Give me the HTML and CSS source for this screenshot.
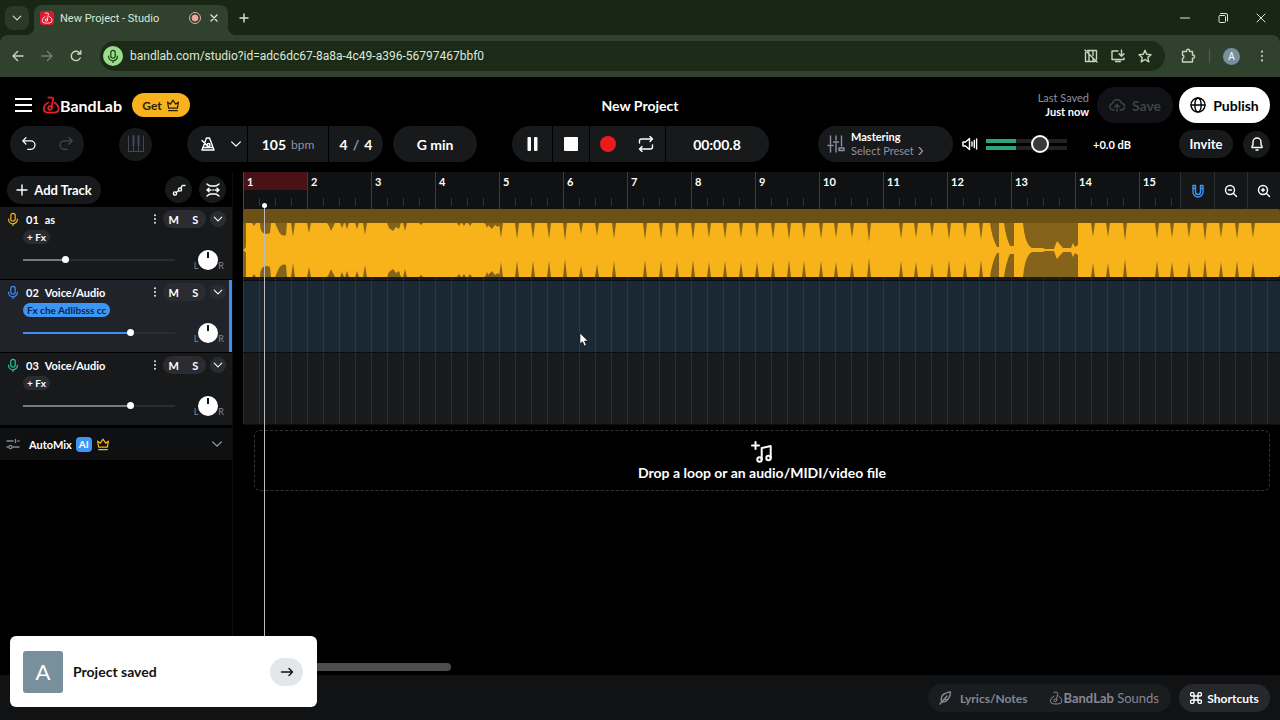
FILE: index.html
```html
<!DOCTYPE html>
<html lang="en">
<head>
<meta charset="utf-8">
<meta name="viewport" content="width=device-width, initial-scale=1.0">
<title>New Project - Studio</title>
<link rel="stylesheet" href="styles.css">
</head>
<body>

<!-- shared icons -->
<svg class="sprite" aria-hidden="true">
	<symbol id="i-chevron" viewBox="0 0 16 16"><path d="M3 5.500l5 5 5-5"/></symbol>
	<symbol id="i-mic" viewBox="0 0 16 16"><rect x="5.500" y="1.500" width="5" height="9" rx="2.500"/><path d="M3 8v.5a5 5 0 0 0 10 0V8M8 13.500v2"/></symbol>
	<symbol id="i-dots" viewBox="0 0 16 16"><g fill="currentColor" stroke="none"><circle cx="8" cy="3" r="1.200"/><circle cx="8" cy="8" r="1.200"/><circle cx="8" cy="13" r="1.200"/></g></symbol>
	<symbol id="i-crown" viewBox="0 0 16 16"><path d="M3 11.500L1.800 4.800 5 7l3-4.500L11 7l3.200-2.200L13 11.500zM3 14.300h10"/></symbol>
	<symbol id="i-logo" viewBox="0 0 20 20"><path d="M7 7.200Q2 10 2 14q0 4.500 5 4.500h6q5.500 0 5.500-4.500 0-3.500-4.500-6.800M7 1.800q3-.6 5 .4 1.200 1-.2 3.400L10.800 13"/><circle cx="8.900" cy="13.300" r="2"/></symbol>
</svg>

<div class="chrome">
	<div class="tabstrip">
		<button class="tab-search" aria-label="Search tabs"><svg class="icon s12"><use href="#i-chevron"/></svg></button>
		<div class="tab">
			<span class="favicon"><svg class="icon s12"><use href="#i-logo"/></svg></span>
			<span class="tab-title">New Project - Studio</span>
			<span class="rec-dot"></span>
			<button aria-label="Close tab"><svg class="icon s12" viewBox="0 0 12 12"><path d="M3 3l6 6M9 3l-6 6"/></svg></button>
		</div>
		<button class="tab-new" aria-label="New tab"><svg class="icon s12" viewBox="0 0 12 12"><path d="M6 2v8M2 6h8"/></svg></button>
		<div class="window-btns">
			<button aria-label="Minimize"><svg class="icon thin s12" viewBox="0 0 12 12"><path d="M1.500 6h9"/></svg></button>
			<button aria-label="Restore"><svg class="icon thin s12" viewBox="0 0 12 12"><rect x="2" y="3.500" width="6.500" height="7" rx="1"/><path d="M3.500 1.500H9q1.500 0 1.500 1.500v6"/></svg></button>
			<button aria-label="Close"><svg class="icon thin s12" viewBox="0 0 12 12"><path d="M2 2l8 8M10 2l-8 8"/></svg></button>
		</div>
	</div>

	<div class="navbar">
		<button aria-label="Back"><svg class="icon s14" viewBox="0 0 14 14"><path d="M12 7H2M6.500 2.500L2 7l4.500 4.500"/></svg></button>
		<button class="dim" aria-label="Forward"><svg class="icon s14" viewBox="0 0 14 14"><path d="M2 7h10M7.500 2.500L12 7l-4.500 4.500"/></svg></button>
		<button aria-label="Reload"><svg class="icon s14" viewBox="0 0 14 14"><path d="M11.200 9A4.700 4.700 0 1 1 11 4.500M11.800 1.800V5H8.600"/></svg></button>
		<div class="omnibox">
			<span class="mic-badge"><svg class="icon s14"><use href="#i-mic"/></svg></span>
			<input type="text" aria-label="Address" value="bandlab.com/studio?id=adc6dc67-8a8a-4c49-a396-56797467bbf0">
			<button aria-label="MIDI blocked"><svg class="icon s14" viewBox="0 0 14 14"><path d="M3.500 1.500h9v9M11 12.500H1.500V3.500M5 5.500v7M5 1.500V3M9 1.500v5M9 9.500v3M1 1l12 12"/></svg></button>
			<button aria-label="Install app"><svg class="icon s14" viewBox="0 0 14 14"><path d="M7 2H1v8.500h12V9M4.500 12.500h5M10.500 1v6M8 4.700l2.500 2.500L13 4.700"/></svg></button>
			<button aria-label="Bookmark"><svg class="icon s14" viewBox="0 0 14 14"><path d="M7 1.300l1.700 4 4.300.4-3.200 2.900 1 4.200L7 10.500l-3.800 2.300 1-4.200L1 5.700l4.300-.4z"/></svg></button>
		</div>
		<button aria-label="Extensions"><svg class="icon s16" viewBox="0 0 16 16"><path d="M2.500 3.500h4V2.700a1.500 1.500 0 0 1 3 0v.8h3V7h.5a1.600 1.600 0 0 1 0 3.200h-.5V14h-10v-3.500a1.800 1.800 0 0 0 0-3.500z"/></svg></button>
		<span class="nav-sep"></span>
		<button class="profile" aria-label="Profile">A</button>
		<button aria-label="Browser menu"><svg class="icon s14"><use href="#i-dots"/></svg></button>
	</div>
</div>

<header class="header">
	<div class="header-left">
		<button class="burger" aria-label="Menu"><span></span><span></span><span></span></button>
		<a class="brand" href="#"><svg class="icon s18"><use href="#i-logo"/></svg>BandLab</a>
		<button class="get">Get <svg class="icon s14"><use href="#i-crown"/></svg></button>
	</div>
	<h1>New Project</h1>
	<div class="header-right">
		<p class="saved">Last Saved<strong>Just now</strong></p>
		<button class="save" disabled><svg class="icon s16" viewBox="0 0 16 16"><path d="M5 13H4a3.300 3.300 0 0 1-.5-6.500 4.600 4.600 0 0 1 9-.2A3.300 3.300 0 0 1 12 13h-1M8 14.500V8M5.500 10L8 7.500l2.500 2.500"/></svg>Save</button>
		<button class="publish"><svg class="icon s16" viewBox="0 0 16 16"><circle cx="8" cy="8" r="7"/><ellipse cx="8" cy="8" rx="3.200" ry="7"/><path d="M1 8h14"/></svg>Publish</button>
	</div>
</header>

<div class="toolbar">
	<div class="tools-left">
		<div class="pill history">
			<button aria-label="Undo"><svg class="icon s16" viewBox="0 0 18 18"><path d="M5.500 2L2 5.500 5.500 9M2 5.500h9a4.500 4.500 0 0 1 0 9.500H7.500"/></svg></button>
			<button class="off" aria-label="Redo"><svg class="icon s16" viewBox="0 0 18 18"><path d="M12.500 2L16 5.500 12.500 9M16 5.500H7a4.500 4.500 0 0 0 0 9.500h3.500"/></svg></button>
		</div>
		<button class="round midi" aria-label="MIDI keyboard"><svg class="icon s18" viewBox="0 0 18 18"><path d="M1.500 1v15.500h15V1M6.500 11v5M11.500 11v5"/><path class="thick" d="M6.500 1v9.500M11.500 1v9.500"/></svg></button>
		<div class="pill tempo">
			<button class="metro" aria-label="Metronome"><svg class="icon s16" viewBox="0 0 16 16"><path d="M6.500 2h3L14 14H2zM3.500 11.500h9M2 4.500l6 6"/><circle cx="8.500" cy="9" r="1.500"/></svg></button>
			<button class="metro-more" aria-label="Metronome options"><svg class="icon s14"><use href="#i-chevron"/></svg></button>
			<button class="bpm"><b>105</b> bpm</button>
			<button class="sig">4 <i>/</i> 4</button>
		</div>
		<button class="pill key">G min</button>
	</div>
	<div class="pill transport">
		<button class="w40" aria-label="Pause"><svg class="solid s16" viewBox="0 0 16 16"><rect x="3.500" y="1" width="3.500" height="14" rx="1"/><rect x="10" y="1" width="3.500" height="14" rx="1"/></svg></button>
		<button class="w36" aria-label="Stop"><svg class="solid s16" viewBox="0 0 16 16"><rect x="1" y="1" width="14" height="14" rx="1"/></svg></button>
		<button class="w36 rec" aria-label="Record"><svg class="solid s16" viewBox="0 0 16 16"><circle cx="8" cy="8" r="8"/></svg></button>
		<button class="w38 loop" aria-label="Loop"><svg class="icon s16" viewBox="0 0 16 16"><path d="M1.500 7V5q0-2 2-2h11M12 .5L14.500 3 12 5.500M14.500 9v2q0 2-2 2h-11M4 10.500L1.500 13 4 15.500"/></svg></button>
		<output class="time">00:00.8</output>
	</div>
	<div class="tools-right">
		<button class="pill mastering">
			<svg class="icon s18" viewBox="0 0 18 18"><path d="M3.500 1v8M1 10.500h5M3.500 12v5M9 1v4M6.500 7h5M9 8.500V17M14.500 1v10M12 13h5v2.500h-5z"/></svg>
			<span><b>Mastering</b>Select Preset <svg class="icon s8" viewBox="0 0 8 8"><path d="M2 0l3.500 4L2 8"/></svg></span>
		</button>
		<svg class="icon s16 speaker" viewBox="0 0 16 16"><path d="M1 6v4h2.500l4 3.500v-11L3.500 6zM10 6v4M12.300 4.500v7M14.600 3v10"/></svg>
		<input class="master" type="range" aria-label="Master volume" min="0" max="100" value="71">
		<span class="db">+0.0 dB</span>
		<button class="invite">Invite</button>
		<button class="round bell" aria-label="Notifications"><svg class="icon s14" viewBox="0 0 14 14"><path d="M2 10.500V9.200l1-1.400V5a4 4 0 0 1 8 0v2.800l1 1.400v1.300zM6 13h2"/></svg></button>
	</div>
</div>

<main class="studio">
	<aside class="panel">
		<div class="panel-head">
			<button class="add-track"><svg class="icon s12" viewBox="0 0 12 12"><path d="M6 1v10M1 6h10"/></svg>Add Track</button>
			<button class="round small" aria-label="Automation"><svg class="icon s14" viewBox="0 0 14 14"><circle cx="3" cy="10.500" r="1.600"/><circle cx="8" cy="6.500" r="1.600"/><path d="M4.300 9.500l2.400-2M8.800 5l1.500-2.500H13"/></svg></button>
			<button class="round small" aria-label="Fit tracks"><svg class="icon s14" viewBox="0 0 14 14"><path d="M1 1q2 2 4 2h4q2 0 4-2M1 13q2-2 4-2h4q2 0 4 2M1 7h4M9 7h4M3 5.200L1 7l2 1.800M11 5.200L13 7l-2 1.800M6.800 7h.4"/></svg></button>
		</div>

		<section class="track gold">
			<div class="track-top">
				<svg class="icon s14 mic"><use href="#i-mic"/></svg>
				<span class="num">01</span><span class="name">as</span>
				<button class="more" aria-label="Track menu"><svg class="icon s12"><use href="#i-dots"/></svg></button>
				<div class="ms"><button>M</button><button>S</button></div>
				<button class="round tiny" aria-label="Expand"><svg class="icon s12"><use href="#i-chevron"/></svg></button>
			</div>
			<button class="fx">+ Fx</button>
			<div class="track-mix">
				<input class="vol" type="range" aria-label="Track 1 volume" value="27" style="--val:28%">
				<span class="pan"><i>L</i><span class="knob"></span><i>R</i></span>
			</div>
		</section>

		<section class="track blue selected">
			<div class="track-top">
				<svg class="icon s14 mic"><use href="#i-mic"/></svg>
				<span class="num">02</span><span class="name">Voice/Audio</span>
				<button class="more" aria-label="Track menu"><svg class="icon s12"><use href="#i-dots"/></svg></button>
				<div class="ms"><button>M</button><button>S</button></div>
				<button class="round tiny" aria-label="Expand"><svg class="icon s12"><use href="#i-chevron"/></svg></button>
			</div>
			<button class="fx preset">Fx che Adlibsss cc</button>
			<div class="track-mix">
				<input class="vol" type="range" aria-label="Track 2 volume" value="72" style="--val:70%">
				<span class="pan"><i>L</i><span class="knob"></span><i>R</i></span>
			</div>
		</section>

		<section class="track green">
			<div class="track-top">
				<svg class="icon s14 mic"><use href="#i-mic"/></svg>
				<span class="num">03</span><span class="name">Voice/Audio</span>
				<button class="more" aria-label="Track menu"><svg class="icon s12"><use href="#i-dots"/></svg></button>
				<div class="ms"><button>M</button><button>S</button></div>
				<button class="round tiny" aria-label="Expand"><svg class="icon s12"><use href="#i-chevron"/></svg></button>
			</div>
			<button class="fx">+ Fx</button>
			<div class="track-mix">
				<input class="vol" type="range" aria-label="Track 3 volume" value="72" style="--val:70%">
				<span class="pan"><i>L</i><span class="knob"></span><i>R</i></span>
			</div>
		</section>

		<button class="automix">
			<svg class="icon s14 sliders" viewBox="0 0 14 14"><path d="M1 4h6M12 4h1M1 10h1M7 10h6M9.500 2.500v3"/><circle cx="4.500" cy="10" r="1.600"/></svg>
			AutoMix <span class="ai">AI</span>
			<svg class="icon s14 crown"><use href="#i-crown"/></svg>
			<svg class="icon s14 end"><use href="#i-chevron"/></svg>
		</button>
	</aside>

	<div class="timeline">
		<div class="ruler">
			<ol class="bars js-bars"></ol>
			<div class="ruler-tools">
				<button class="snap" aria-label="Snap"><svg class="icon s14" viewBox="0 0 14 14"><path d="M2 1.500h2.500V8a2.500 2.500 0 0 0 5 0V1.500H12V8A5 5 0 0 1 2 8zM2 4.500h2.500M9.500 4.500H12"/></svg></button>
				<button aria-label="Zoom out"><svg class="icon s14" viewBox="0 0 14 14"><circle cx="6" cy="6" r="4.500"/><path d="M9.500 9.500L12.500 12.500M4.500 6h3"/></svg></button>
				<button aria-label="Zoom in"><svg class="icon s14" viewBox="0 0 14 14"><circle cx="6" cy="6" r="4.500"/><path d="M9.500 9.500L12.500 12.500M4.500 6h3M6 4.500v3"/></svg></button>
			</div>
		</div>
		<div class="lane">
			<div class="clip">
				<svg class="wave" width="1037" height="54" viewBox="0 0 1037 54">
					<g id="half">
						<path class="js-notches"/>
						<path d="M0 0h3v24l-2 2.500H0zM17 0h11l-1 10q-4 2-7 0-3-3-3-9zM32 0h12l-1 12q-4 2-7-3zM84 0h8l-2 4-2 4-2-5zM144 0h14l-2 6-3-2-3 4-4-3zM241 0h17l-3 4-3-2-3 4-4-4z"/>
						<path d="M747 0h9v24h-2q-5-9-7-24zM761 0h10v23h-4q-4-8-6-23zM780 0h55v22l-3 2-2-4-2 5h-8q-2-2-6-7-2 5-3 8h-9l-2-1h-11q-7-3-9-25z"/>
					</g>
					<use href="#half" transform="matrix(1 0 0 -1 0 54)"/>
				</svg>
			</div>
		</div>
		<div class="lane active"></div>
		<div class="lane"></div>
		<div class="drop">
			<svg class="icon s24 note" viewBox="0 0 24 24"><path d="M5.500 2v7M2 5.500h7"/><circle cx="9.500" cy="19.500" r="2.200"/><circle cx="18.500" cy="18" r="2.200"/><path d="M11.700 19.500V8l9-2v12"/></svg>
			<p>Drop a loop or an audio/MIDI/video file</p>
		</div>
		<div class="playhead"></div>
		<div class="scrollbar"></div>
	</div>
</main>

<footer class="footer">
	<div class="foot-pill">
		<button class="lyrics"><svg class="icon s14" viewBox="0 0 14 14"><path d="M2 13L9 5M3.500 11Q2 5 7 2.500 9.500 1 12.500 1q0 4-2 6.500Q8 11.500 3.500 11M6 8.500h4"/></svg>Lyrics/Notes</button>
		<button class="sounds"><svg class="icon s14"><use href="#i-logo"/></svg><b>BandLab</b>&nbsp;Sounds</button>
	</div>
	<button class="shortcuts"><svg class="icon s12" viewBox="0 0 12 12"><path d="M4 4h4v4H4zM4 4H2.500A1.800 1.800 0 1 1 4 2.500zM8 4V2.500A1.800 1.800 0 1 1 9.500 4zM8 8h1.500A1.800 1.800 0 1 1 8 9.500zM4 8v1.500A1.800 1.800 0 1 1 2.500 8z"/></svg>Shortcuts</button>
</footer>

<div class="toast" role="status">
	<span class="avatar">A</span>
	<p>Project saved</p>
	<button aria-label="Open project"><svg class="icon s14" viewBox="0 0 14 14"><path d="M1.500 7h11M9 3.500L12.500 7 9 10.500"/></svg></button>
</div>

<svg class="cursor" width="10" height="15" viewBox="0 0 10 15"><path d="M1 1v11l2.500-2.300L5.300 14l2-.9-1.800-4H9z"/></svg>

<script src="studio.js"></script>
</body>
</html>
```
FILE: styles.css
```css
* {
	margin: 0;
	padding: 0;
	box-sizing: border-box;
}
body {
	display: flex;
	flex-direction: column;
	min-height: 100vh;
	background: #000;
	color: #fff;
	font-family: Lato, "Liberation Sans", sans-serif;
	font-size: 14px;
	overflow: hidden;
}
button {
	display: flex;
	align-items: center;
	justify-content: center;
	border: 0;
	background: none;
	color: inherit;
	font: inherit;
	white-space: nowrap;
}
ol {
	list-style: none;
}
i {
	font-style: normal;
}
.sprite {
	position: absolute;
	width: 0;
	height: 0;
}
.icon {
	flex: none;
	fill: none;
	stroke: currentColor;
	stroke-width: 1.4;
	stroke-linecap: round;
	stroke-linejoin: round;
}
.thin {
	stroke-width: 1;
}
.solid {
	fill: currentColor;
}
.s8 { width: 8px; height: 8px; }
.s12 { width: 12px; height: 12px; }
.s14 { width: 14px; height: 14px; }
.s16 { width: 16px; height: 16px; }
.s18 { width: 18px; height: 18px; }
.s24 { width: 24px; height: 24px; }

/* browser chrome */
.chrome {
	background: #192613;
	font-family: Roboto, "Open Sans", sans-serif;
}
.tabstrip {
	display: flex;
	align-items: center;
	height: 35px;
	padding-left: 5px;
	color: #dce8d6;
}
.tab-search {
	width: 24px;
	height: 24px;
	border-radius: 8px;
	background: #2b3a27;
}
.tab {
	position: relative;
	display: flex;
	align-items: center;
	align-self: flex-end;
	width: 194px;
	height: 30px;
	margin-left: 5px;
	padding: 0 8px 4px 6px;
	border-radius: 8px 8px 0 0;
	background: #30412d;
	font-size: 11px;
}
.tab::before,
.tab::after {
	content: "";
	position: absolute;
	bottom: 0;
	width: 8px;
	height: 8px;
}
.tab::before {
	right: 100%;
	background: radial-gradient(circle at 0 0, transparent 8px, #30412d 8px);
}
.tab::after {
	left: 100%;
	background: radial-gradient(circle at 100% 0, transparent 8px, #30412d 8px);
}
.favicon {
	display: flex;
	align-items: center;
	justify-content: center;
	width: 14px;
	height: 14px;
	border-radius: 3px;
	background: #d9192c;
	color: #fff;
}
.tab-title {
	flex: 1;
	margin-left: 6px;
}
.rec-dot {
	width: 12px;
	height: 12px;
	margin-right: 7px;
	border: 1px solid #eba99d;
	border-radius: 50%;
	background: radial-gradient(#eba99d 46%, #30412d 52%);
}
.tab-new {
	width: 32px;
	height: 24px;
}
.window-btns {
	display: flex;
	gap: 26px;
	margin-left: auto;
	padding-right: 13px;
}
.navbar {
	display: flex;
	align-items: center;
	height: 42px;
	padding: 0 11px;
	gap: 15px;
	border-radius: 8px 8px 0 0;
	background: #30412d;
	color: #c5d8bd;
}
.dim {
	color: #71836c;
}
.omnibox {
	display: flex;
	flex: 1;
	align-items: center;
	gap: 13px;
	height: 30px;
	margin-left: 2px;
	padding: 0 13px 0 3px;
	border-radius: 15px;
	background: #1c2a18;
}
.mic-badge {
	display: flex;
	align-items: center;
	justify-content: center;
	width: 20px;
	height: 20px;
	border-radius: 50%;
	background: #98dc8c;
	color: #1c3a18;
}
.omnibox input {
	flex: 1;
	margin-left: -6px;
	border: 0;
	background: none;
	color: #dce8d6;
	font: 12px Roboto, "Open Sans", sans-serif;
}
.nav-sep {
	width: 1px;
	height: 14px;
	margin: 0 -2px;
	background: #50624b;
}
.profile {
	width: 17px;
	height: 17px;
	border-radius: 50%;
	background: #78909c;
	color: #fff;
	font-size: 10px;
}

/* header */
.header {
	display: grid;
	grid-template-columns: 1fr auto 1fr;
	align-items: center;
	padding: 10px 10px 0;
}
.header h1 {
	font-size: 14px;
}
.header-left,
.header-right {
	display: flex;
	align-items: center;
}
.header-right {
	justify-content: flex-end;
}
.burger {
	flex-direction: column;
	gap: 4px;
	width: 17px;
	margin-left: 5px;
}
.burger span {
	width: 17px;
	height: 2px;
	background: #fff;
}
.brand {
	display: flex;
	align-items: center;
	margin-left: 10px;
	color: #fff;
	font-size: 16px;
	font-weight: 700;
	text-decoration: none;
}
.brand .icon {
	color: #e0202c;
	stroke-width: 2;
}
.get {
	gap: 4px;
	width: 58px;
	height: 24px;
	margin-left: 10px;
	border-radius: 12px;
	background: #f7b21d;
	color: #2c1e00;
	font-size: 12px;
	font-weight: 700;
}
.saved {
	color: #8e90a4;
	font-size: 11px;
	line-height: 14px;
	text-align: right;
}
.saved strong {
	display: block;
	color: #fff;
}
.save,
.publish {
	gap: 7px;
	height: 36px;
	border-radius: 18px;
	font-weight: 700;
}
.save {
	width: 76px;
	margin: 0 6px 0 8px;
	background: #111215;
	color: #3f4146;
}
.publish {
	width: 91px;
	background: #fff;
	color: #000;
}

/* toolbar */
.toolbar {
	display: grid;
	grid-template-columns: 1fr auto 1fr;
	align-items: center;
	margin: 3px 10px 10px;
}
.tools-left,
.tools-right {
	display: flex;
	align-items: center;
}
.tools-right {
	justify-content: flex-end;
}
.pill {
	display: flex;
	height: 36px;
	overflow: hidden;
	border-radius: 18px;
	background: #17191b;
}
.pill > button {
	height: 36px;
}
.history button {
	width: 37px;
}
.off {
	color: #46494d;
}
.round {
	flex: none;
	border-radius: 50%;
	background: #17191b;
}
.midi {
	width: 33px;
	height: 33px;
	margin: 0 35px;
	color: #44485a;
}
.midi .icon {
	stroke-width: 1;
}
.midi .thick {
	stroke-width: 2;
}
.metro { width: 42px; }
.metro-more {
	width: 18px;
	padding-right: 4px;
}
.bpm {
	gap: 5px;
	width: 82px;
	border: solid #000;
	border-width: 0 1px;
	color: #8e90a4;
	font-size: 12px;
}
.bpm b {
	color: #fff;
	font-size: 14px;
}
.sig {
	gap: 5px;
	width: 54px;
	font-weight: 700;
}
.sig i {
	color: #8e90a4;
}
.key {
	width: 84px;
	margin-left: 10px;
	font-weight: 700;
}
.w36 { width: 37px; }
.w38 { width: 38px; }
.w40 { width: 41px; }
.transport .w40,
.transport .w36 {
	border-right: 1px solid #000;
}
.transport .rec {
	border-right: 0;
	color: #e81c1c;
}
.time {
	display: flex;
	align-items: center;
	justify-content: center;
	width: 104px;
	border-left: 1px solid #000;
	font-weight: 700;
}
.mastering {
	justify-content: flex-start;
	gap: 6px;
	width: 135px;
	padding-left: 9px;
	font-size: 11px;
	line-height: 14px;
	text-align: left;
	color: #8e90a4;
}
.mastering b {
	display: block;
	color: #fff;
}
.speaker {
	margin: 0 8px 0 9px;
}
.master {
	width: 81px;
	height: 20px;
	appearance: none;
	background:
		linear-gradient(90deg, #2fa57c 30px, #202224 0) 0 5px / 100% 4px no-repeat,
		linear-gradient(90deg, #2fa57c 30px, #202224 0) 0 12px / 100% 4px no-repeat;
}
.master::-webkit-slider-thumb {
	width: 18px;
	height: 18px;
	appearance: none;
	border: 2px solid #fff;
	border-radius: 50%;
	background: #3a3a3c;
}
.db {
	width: 90px;
	text-align: center;
	font-size: 11px;
	font-weight: 700;
}
.invite {
	width: 54px;
	height: 28px;
	margin-left: 22px;
	border-radius: 14px;
	background: #17191b;
	font-size: 13px;
	font-weight: 700;
}
.bell {
	width: 27px;
	height: 27px;
	margin-left: 10px;
}

/* track panel */
.studio {
	display: flex;
	flex: 1;
	gap: 10px;
}
.panel {
	flex: none;
	width: 233px;
	border-right: 1px solid #0e0e10;
}
.panel-head {
	display: flex;
	align-items: center;
	gap: 7px;
	height: 35px;
	padding: 0 6px 0 7px;
}
.add-track {
	gap: 6px;
	width: 94px;
	height: 28px;
	margin-right: auto;
	border-radius: 14px;
	background: #17191b;
	font-size: 13px;
	font-weight: 700;
}
.small {
	width: 27px;
	height: 27px;
}
.track {
	height: 72px;
	margin-bottom: 1px;
	padding: 3px 6px 0;
	background: #17191b;
	font-size: 11px;
	font-weight: 700;
}
.track.selected {
	background: #20242a;
	border-right: 3px solid #3e8df2;
	padding-right: 3px;
}
.track-top {
	display: flex;
	align-items: center;
	height: 18px;
}
.num {
	margin: 0 6px;
}
.name {
	flex: 1;
}
.gold .mic { color: #f7b21d; }
.blue .mic { color: #3e8df2; }
.green .mic { color: #1fc79a; }
.more {
	width: 14px;
	margin-right: 1px;
}
.ms {
	display: flex;
	width: 43px;
	height: 18px;
	margin-right: 4px;
	border-radius: 9px;
	background: #2a2c31;
}
.ms button {
	flex: 1;
}
.tiny {
	width: 16px;
	height: 16px;
	background: #2a2c31;
}
.fx {
	height: 14px;
	margin: 2px 0 0 17px;
	padding: 0 4px;
	border-radius: 7px;
	background: #2a2c31;
	font-size: 10px;
	font-weight: 700;
}
.preset {
	background: #3e96f4;
	color: #0b2547;
}
.track-mix {
	display: flex;
	align-items: center;
	justify-content: space-between;
	height: 31px;
	padding: 0 2px 0 17px;
}
.vol {
	width: 152px;
	height: 8px;
	appearance: none;
	background: linear-gradient(90deg, #77797c var(--val), #2a2c30 0) 0 50% / 100% 2px no-repeat;
}
.blue .vol {
	background-image: linear-gradient(90deg, #3e8df2 var(--val), #2a2c30 0);
}
.vol::-webkit-slider-thumb {
	width: 7px;
	height: 7px;
	appearance: none;
	border-radius: 50%;
	background: #fff;
}
.pan {
	display: flex;
	align-items: flex-end;
	color: #85878a;
	font-size: 9px;
	font-weight: 400;
	line-height: 8px;
}
.knob {
	width: 20px;
	height: 20px;
	border-radius: 50%;
	background: linear-gradient(#111, #111) 50% 2px / 2px 6px no-repeat #fff;
}
.automix {
	width: 100%;
	height: 32px;
	margin-top: 3px;
	padding: 0 8px 0 6px;
	background: #0f1012;
	font-size: 11px;
	font-weight: 700;
}
.sliders {
	margin-right: 9px;
	color: #85878a;
}
.ai {
	width: 16px;
	height: 15px;
	margin: 0 4px;
	border-radius: 4px;
	background: #3e96f4;
	font-size: 10px;
	line-height: 15px;
}
.crown {
	color: #f7b21d;
}
.end {
	margin-left: auto;
	color: #a0a2a4;
}

/* timeline */
.timeline {
	position: relative;
	flex: 1;
	min-width: 0;
}
.ruler {
	display: flex;
	height: 37px;
	background: #101113;
}
.bars {
	display: flex;
	flex: 1;
	min-width: 0;
	overflow: hidden;
}
.bars li {
	flex: none;
	width: 64px;
	padding: 3px 0 0 3px;
	border-left: 1px solid #3a3c3e;
	background: repeating-linear-gradient(90deg, transparent 0 15px, #333537 15px 16px) 0 26px / 100% 8px no-repeat;
	font-size: 11px;
	font-weight: 700;
}
.bars li:first-child {
	border-left-color: #a01c26;
	background:
		repeating-linear-gradient(90deg, transparent 0 15px, #333537 15px 16px) 0 26px / 100% 8px no-repeat,
		linear-gradient(#4a1116, #4a1116) 0 0 / 100% 18px no-repeat;
}
.bars li:last-child {
	flex: 1;
}
.ruler-tools {
	display: flex;
}
.ruler-tools button {
	width: 33px;
	border-left: 1px solid #2c2e30;
	background: #141618;
}
.ruler-tools button:first-child {
	width: 34px;
}
.ruler-tools .snap {
	color: #3e96f4;
}
.lane {
	height: 72px;
	border-bottom: 1px solid #0c0e0f;
	background: repeating-linear-gradient(90deg, #2b2e2f 0 1px, #181a1b 1px 16px);
}
.lane.active {
	background: repeating-linear-gradient(90deg, #283a46 0 1px, #192833 1px 16px);
}
.clip {
	height: 68px;
	padding-top: 14px;
	overflow: hidden;
	border-radius: 2px;
	background: linear-gradient(#6d5014 14px, #f8b31b 0);
}
.wave {
	display: block;
	fill: #86631a;
}
.drop {
	display: flex;
	flex-direction: column;
	align-items: center;
	height: 61px;
	margin: 5px 10px 0 11px;
	padding-top: 9px;
	border: 1px dashed #333;
	border-radius: 6px;
	font-weight: 700;
}
.note {
	stroke-width: 2;
}
.playhead {
	position: absolute;
	top: 31px;
	bottom: 0;
	left: 21px;
	width: 1px;
	background: #bbb;
}
.playhead::before {
	content: "";
	position: absolute;
	left: -2px;
	width: 5px;
	height: 5px;
	border-radius: 50%;
	background: #fff;
}
.scrollbar {
	position: absolute;
	bottom: 4px;
	left: 0;
	width: 208px;
	height: 8px;
	border-radius: 4px;
	background: #4d4d4d;
}

/* footer */
.footer {
	display: flex;
	justify-content: flex-end;
	gap: 8px;
	padding: 9px 10px 8px;
	background: #101214;
}
.foot-pill {
	display: flex;
	gap: 22px;
	padding: 0 12px 0 10px;
	border-radius: 14px;
	background: #1a1d20;
	color: #858892;
}
.foot-pill .lyrics {
	gap: 8px;
	font-size: 12px;
	font-weight: 700;
}
.foot-pill .sounds {
	font-size: 13px;
}
.shortcuts {
	gap: 5px;
	width: 91px;
	height: 28px;
	border-radius: 14px;
	background: #26282b;
	font-size: 12px;
	font-weight: 700;
}

/* overlays */
.toast {
	position: fixed;
	bottom: 13px;
	left: 10px;
	display: flex;
	align-items: center;
	width: 307px;
	height: 71px;
	padding: 0 14px 0 13px;
	border-radius: 6px;
	background: #fff;
	color: #111;
	font-weight: 700;
}
.toast p {
	flex: 1;
	margin-left: 10px;
}
.toast button {
	width: 33px;
	height: 28px;
	border-radius: 14px;
	background: #e3e7ea;
}
.avatar {
	width: 40px;
	height: 42px;
	border-radius: 3px;
	background: #78909c;
	color: #fff;
	font-size: 22px;
	font-weight: 400;
	line-height: 42px;
	text-align: center;
}
.cursor {
	position: fixed;
	top: 332px;
	left: 579px;
	fill: #fff;
	stroke: #000;
	stroke-width: .6;
}
```
FILE: studio.js
```js
(function(){

	// bar numbers
	var bars = document.querySelector('.js-bars');
	for (var i = 1; i <= 15; i++) {
		var li = document.createElement('li');
		li.textContent = i;
		bars.appendChild(li);
	}

	// gaps between the beats: [x, depth]
	var notches = [
		[11, 3], [50, 14], [66, 10], [99, 5], [104, 6], [114, 6], [122, 12], [162, 8],
		[178, 2], [216, 3], [221, 3], [227, 3], [244, 5], [258, 15],
		[274, 16], [290, 16], [306, 16], [322, 18], [338, 11], [354, 13], [371, 16],
		[402, 17], [418, 16], [434, 15], [450, 17], [466, 15], [482, 16], [498, 15],
		[514, 15], [530, 16], [546, 17], [561, 16], [578, 16], [593, 15], [609, 15], [626, 19],
		[658, 16], [673, 15], [689, 14], [706, 17], [722, 15], [738, 17],
		[850, 14], [865, 14], [882, 18], [914, 16], [929, 15], [946, 15], [962, 18],
		[978, 15], [994, 16], [1010, 15]
	];
	var d = notches.map(function(n){
		return 'M' + (n[0] - 2) + ' 0L' + n[0] + ' ' + n[1] + 'L' + (n[0] + 2) + ' 0z';
	}).join('');
	document.querySelector('.js-notches').setAttribute('d', d);
})();
```
